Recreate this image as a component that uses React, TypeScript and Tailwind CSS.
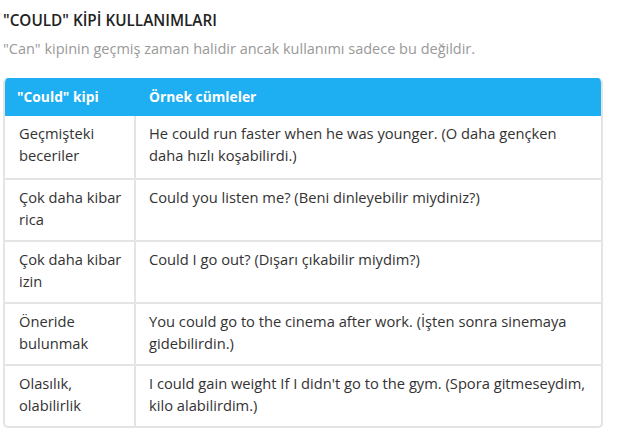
const rows: [string, string][] = [
  ["Geçmişteki beceriler", "He could run faster when he was younger. (O daha gençken daha hızlı koşabilirdi.)"],
  ["Çok daha kibar rica", "Could you listen me? (Beni dinleyebilir miydiniz?)"],
  ["Çok daha kibar izin", "Could I go out? (Dışarı çıkabilir miydim?)"],
  ["Öneride bulunmak", "You could go to the cinema after work. (İşten sonra sinemaya gidebilirdin.)"],
  ["Olasılık, olabilirlik", "I could gain weight If I didn't go to the gym. (Spora gitmeseydim, kilo alabilirdim.)"],
];

export default function App() {
  return (
    <div className="w-[623px] h-[437px] bg-white font-['Open_Sans',sans-serif] text-[#333] pl-[3px] pr-[20px]">
      {/* Heading */}
      <h2 className="pt-[10px] text-[15.3px] font-semibold leading-[20px] text-[#222]">"COULD" KİPİ KULLANIMLARI</h2>
      <p className="mt-[9px] text-[14.5px] leading-[20px] text-[#999]">
        "Can" kipinin geçmiş zaman halidir ancak kullanımı sadece bu değildir.
      </p>

      {/* Table */}
      <div className="mt-[19px] w-[600px] rounded-[5px] border-2 border-t-0 border-[#e4e4e4] overflow-hidden">
        <div className="flex bg-[#1eaef2] text-white font-bold text-[13.8px] h-[38px] items-center -mx-[2px]">
          <div className="w-[135px] pl-[14px]">"Could" kipi</div>
          <div className="pl-[11px]">Örnek cümleler</div>
        </div>
        {rows.map(([a, b], i) => (
          <div key={i} className={`flex h-[62px] text-[14.7px] leading-[22px] ${i > 0 ? "border-t-2 border-[#e4e4e4]" : ""}`}>
            <div className="w-[131px] pl-[14px] pr-2 pt-[6px] border-r-2 border-[#e4e4e4]">{a}</div>
            <div className="flex-1 pl-[13px] pr-3 pt-[6px]">{b}</div>
          </div>
        ))}
      </div>
    </div>
  );
}
